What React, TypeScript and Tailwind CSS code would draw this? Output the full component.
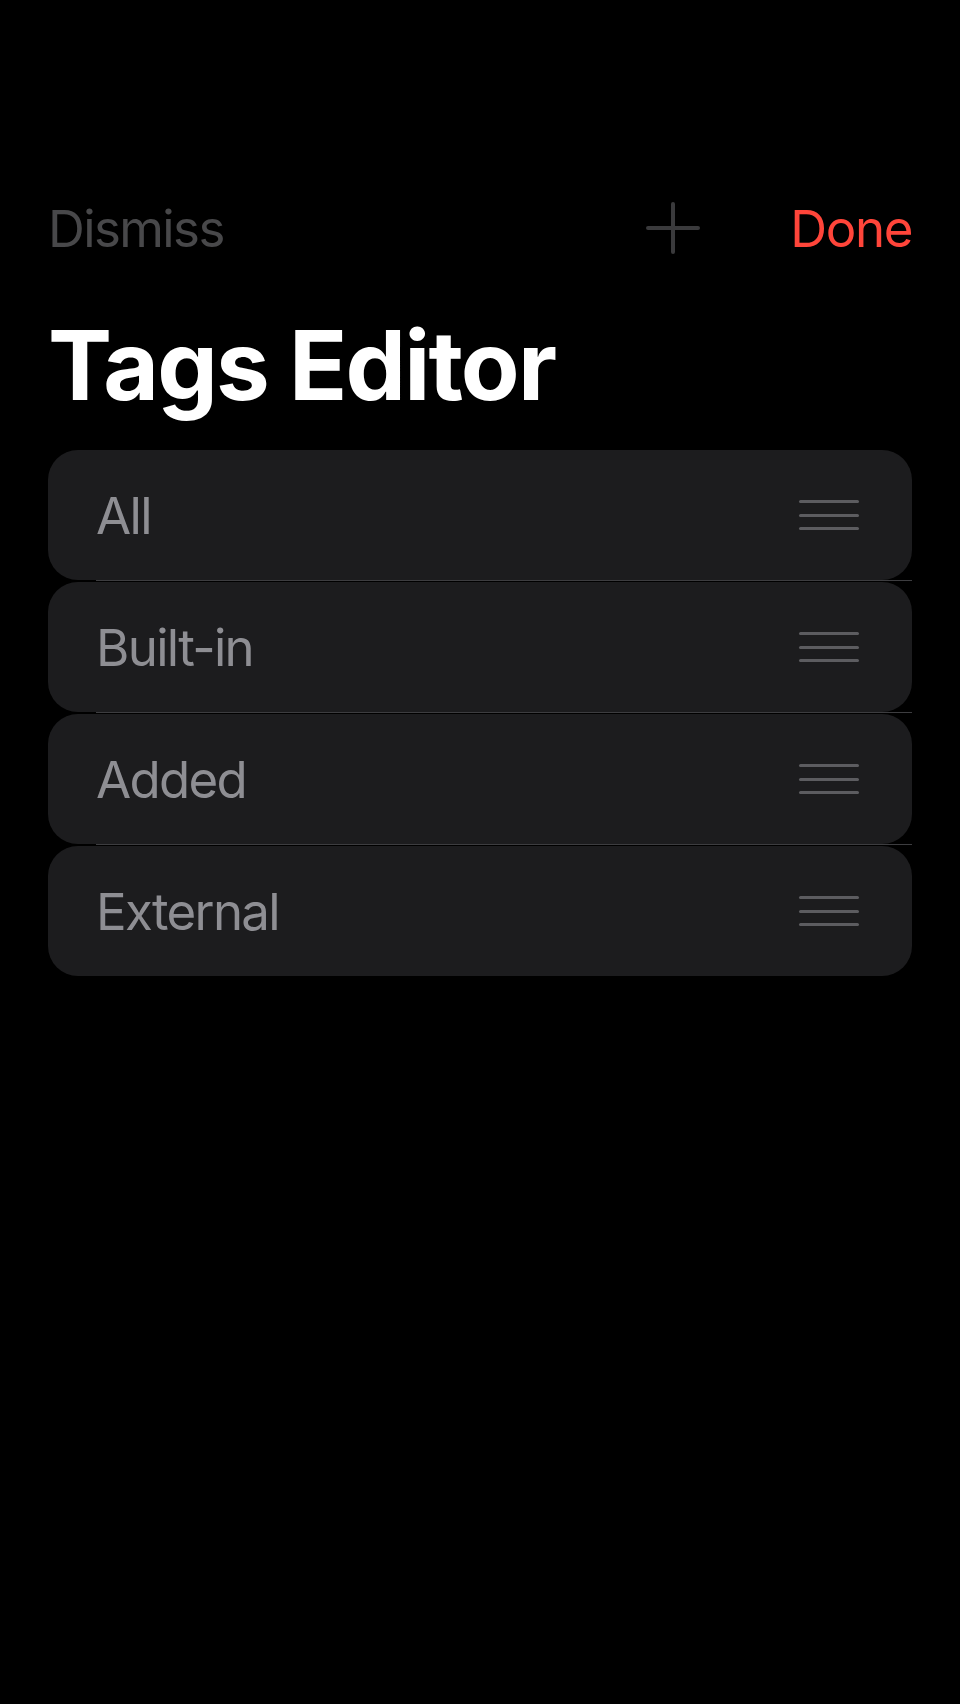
import React from "react";

const tags = ["All", "Built-in", "Added", "External"];

const Grip = () => (
  <div className="flex w-[60px] flex-col gap-[10.5px]">
    <div className="h-[3px] rounded-full bg-[#5c5c60]" />
    <div className="h-[3px] rounded-full bg-[#5c5c60]" />
    <div className="h-[3px] rounded-full bg-[#5c5c60]" />
  </div>
);

const PlusIcon = () => (
  <svg width="54" height="52" viewBox="0 0 54 52" fill="none">
    <path
      d="M27 2v48M2 26h50"
      stroke="#3a3a3c"
      strokeWidth="4"
      strokeLinecap="round"
    />
  </svg>
);

const App = () => {
  return (
    <div
      className="min-h-[1704px] w-[960px] bg-black px-[48px]"
      style={{ fontFamily: "Inter, 'Noto Sans', sans-serif" }}
    >
      <div className="h-[184px]" />
      <div className="flex h-[88px] items-center">
        <div className="flex-1 text-[51px] leading-none tracking-[-1.6px] text-[#48484a]">
          Dismiss
        </div>
        <div className="mr-[90px]">
          <PlusIcon />
        </div>
        <div className="text-[51px] leading-none tracking-[-1.4px] text-[#ff453a]">
          Done
        </div>
      </div>
      <div className="mt-[45px] text-[96px] font-bold leading-none tracking-[-1.8px] text-white">
        Tags Editor
      </div>
      <div className="mt-[37px] flex flex-col">
        {tags.map((tag, i) => (
          <div key={tag} className="flex flex-col">
            <div className="flex h-[130px] items-center justify-between rounded-[30px] bg-[#1c1c1e] pl-[48px] pr-[53px]">
              <div className="text-[51px] leading-none tracking-[-1.7px] text-[#8e8e93]">
                {tag}
              </div>
              <Grip />
            </div>
            {i < tags.length - 1 && (
              <div className="h-[2px] pl-[48px]">
                <div className="h-px bg-[#3d3d40]" />
              </div>
            )}
          </div>
        ))}
      </div>
    </div>
  );
};

export default App;
